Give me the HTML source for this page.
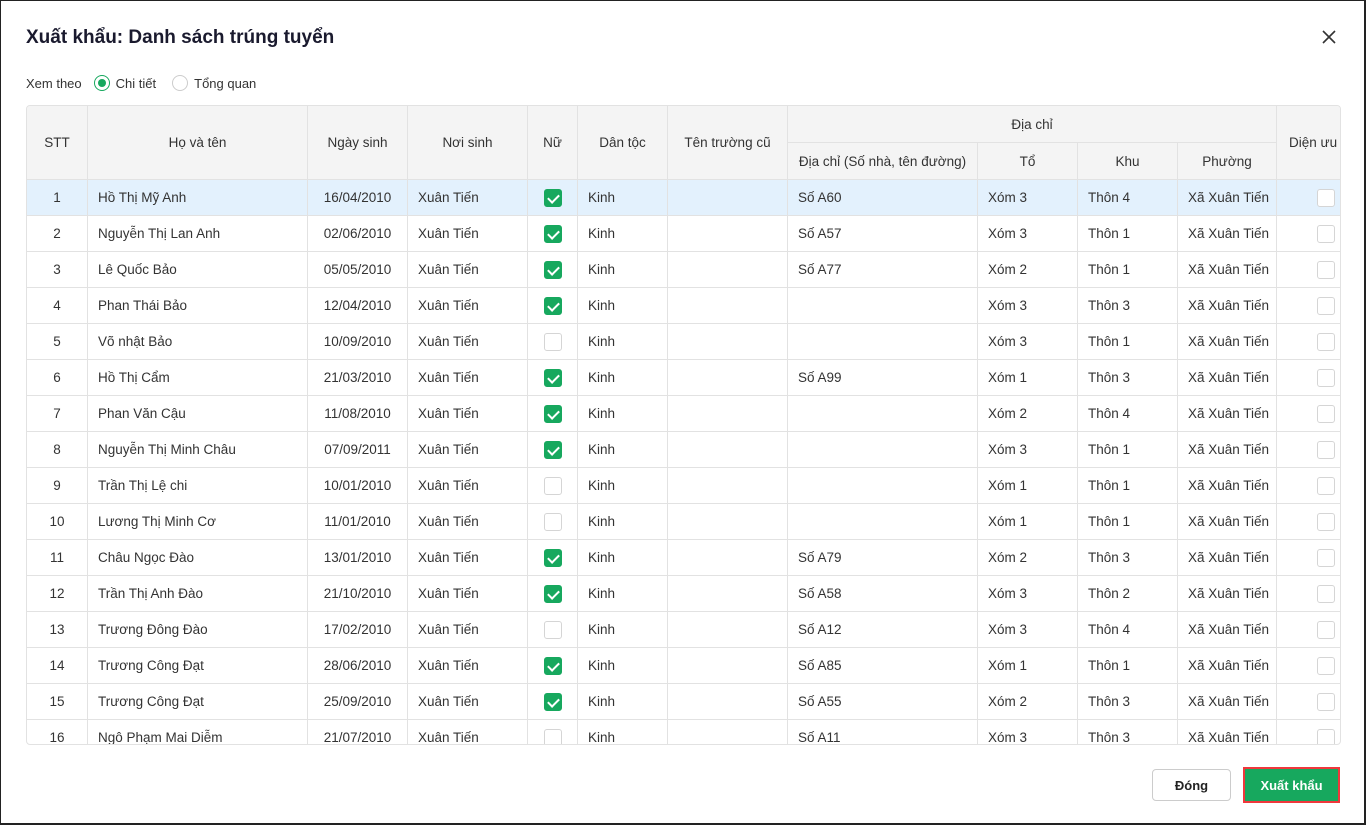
<!DOCTYPE html>
<html><head><meta charset="utf-8"><style>
*{box-sizing:border-box;margin:0;padding:0}
body{width:1366px;height:825px;background:#fff;font-family:"Liberation Sans",sans-serif;color:#333;position:relative;overflow:hidden;border:1px solid #222;border-right:2px solid #222;border-bottom:2px solid #222}
.title{position:absolute;left:25px;top:26px;font-size:19px;font-weight:bold;color:#1a1a2e}
.close{position:absolute;left:1320px;top:28px}
.view{position:absolute;left:25px;top:74px;font-size:13px;display:flex;align-items:center}
.rd{width:16px;height:16px;border-radius:50%;border:1px solid #ccc;display:inline-block;margin:0 6px 0 0;position:relative}
.rd.on{border-color:#17a85e}
.rd.on::after{content:"";position:absolute;left:3px;top:3px;width:8px;height:8px;border-radius:50%;background:#17a85e}
.wrap{position:absolute;left:25px;top:104px;width:1315px;height:640px;overflow:hidden;border:1px solid #e2e2e2;border-radius:4px}
table{border-collapse:collapse;table-layout:fixed;width:1340px;font-size:13.5px;margin:-1px 0 0 -1px}
th{background:#f4f4f4;font-weight:normal;border:1px solid #e2e2e2;height:37px;color:#333}
td{border:1px solid #e2e2e2;height:36px;padding:0 10px;white-space:nowrap;overflow:hidden}
tr.sel td{background:#e3f1fd}
.c{text-align:center}.r{text-align:center}
.cb{display:inline-block;width:18px;height:18px;border-radius:3px;border:1px solid #d5d5d5;background:#fff;vertical-align:middle}
.cb.on{background:#17a85e;border-color:#17a85e;position:relative}
.cb.on::after{content:"";position:absolute;left:5px;top:2px;width:5px;height:9px;border:solid #fff;border-width:0 2px 2px 0;transform:rotate(45deg)}
.btn{position:absolute;font-size:13px;font-weight:bold;display:flex;align-items:center;justify-content:center}
</style></head><body>
<div class="title">Xuất khẩu: Danh sách trúng tuyển</div>
<svg class="close" width="16" height="16" viewBox="0 0 16 16"><path d="M2 2L14 14M14 2L2 14" stroke="#333" stroke-width="1.6"/></svg>
<div class="view"><span style="margin-right:12px">Xem theo</span><span class="rd on"></span><span style="margin-right:16px">Chi tiết</span><span class="rd"></span><span>Tổng quan</span></div>
<div class="wrap"><table>
<colgroup><col style="width:61px"><col style="width:220px"><col style="width:100px"><col style="width:120px"><col style="width:50px"><col style="width:90px"><col style="width:120px"><col style="width:190px"><col style="width:100px"><col style="width:100px"><col style="width:99px"><col style="width:90px"></colgroup>
<tr><th rowspan="2">STT</th><th rowspan="2">Họ và tên</th><th rowspan="2">Ngày sinh</th><th rowspan="2">Nơi sinh</th><th rowspan="2">Nữ</th><th rowspan="2">Dân tộc</th><th rowspan="2">Tên trường cũ</th><th colspan="4">Địa chỉ</th><th rowspan="2" style="text-align:left;padding-left:12px">Diện ưu tiên</th></tr>
<tr><th>Địa chỉ (Số nhà, tên đường)</th><th>Tổ</th><th>Khu</th><th>Phường</th></tr>
<tbody id="tb"></tbody>
</table></div>
<div class="btn" style="left:1151px;top:768px;width:79px;height:32px;border:1px solid #ccc;border-radius:4px;color:#222">Đóng</div>
<div class="btn" style="left:1242px;top:766px;width:97px;height:36px;border:2px solid #f0373c;background:#17a85e;color:#fff">Xuất khẩu</div>
<script>
var d=[["Hồ Thị Mỹ Anh","16/04/2010",1,"Số A60","Xóm 3","Thôn 4"],["Nguyễn Thị Lan Anh","02/06/2010",1,"Số A57","Xóm 3","Thôn 1"],["Lê Quốc Bảo","05/05/2010",1,"Số A77","Xóm 2","Thôn 1"],["Phan Thái Bảo","12/04/2010",1,"","Xóm 3","Thôn 3"],["Võ nhật Bảo","10/09/2010",0,"","Xóm 3","Thôn 1"],["Hồ Thị Cẩm","21/03/2010",1,"Số A99","Xóm 1","Thôn 3"],["Phan Văn Cậu","11/08/2010",1,"","Xóm 2","Thôn 4"],["Nguyễn Thị Minh Châu","07/09/2011",1,"","Xóm 3","Thôn 1"],["Trần Thị Lệ chi","10/01/2010",0,"","Xóm 1","Thôn 1"],["Lương Thị Minh Cơ","11/01/2010",0,"","Xóm 1","Thôn 1"],["Châu Ngọc Đào","13/01/2010",1,"Số A79","Xóm 2","Thôn 3"],["Trần Thị Anh Đào","21/10/2010",1,"Số A58","Xóm 3","Thôn 2"],["Trương Đông Đào","17/02/2010",0,"Số A12","Xóm 3","Thôn 4"],["Trương Công Đạt","28/06/2010",1,"Số A85","Xóm 1","Thôn 1"],["Trương Công Đạt","25/09/2010",1,"Số A55","Xóm 2","Thôn 3"],["Ngô Phạm Mai Diễm","21/07/2010",0,"Số A11","Xóm 3","Thôn 3"]];
var h="";d.forEach(function(r,i){h+='<tr'+(i==0?' class="sel"':'')+'><td class="c">'+(i+1)+'</td><td>'+r[0]+'</td><td class="r">'+r[1]+'</td><td>Xuân Tiến</td><td class="c" style="padding:0"><span class="cb'+(r[2]?' on':'')+'"></span></td><td>Kinh</td><td></td><td>'+r[3]+'</td><td>'+r[4]+'</td><td>'+r[5]+'</td><td>Xã Xuân Tiến</td><td style="padding-left:40px"><span class="cb"></span></td></tr>'});
document.getElementById("tb").innerHTML=h;
</script>
</body></html>
